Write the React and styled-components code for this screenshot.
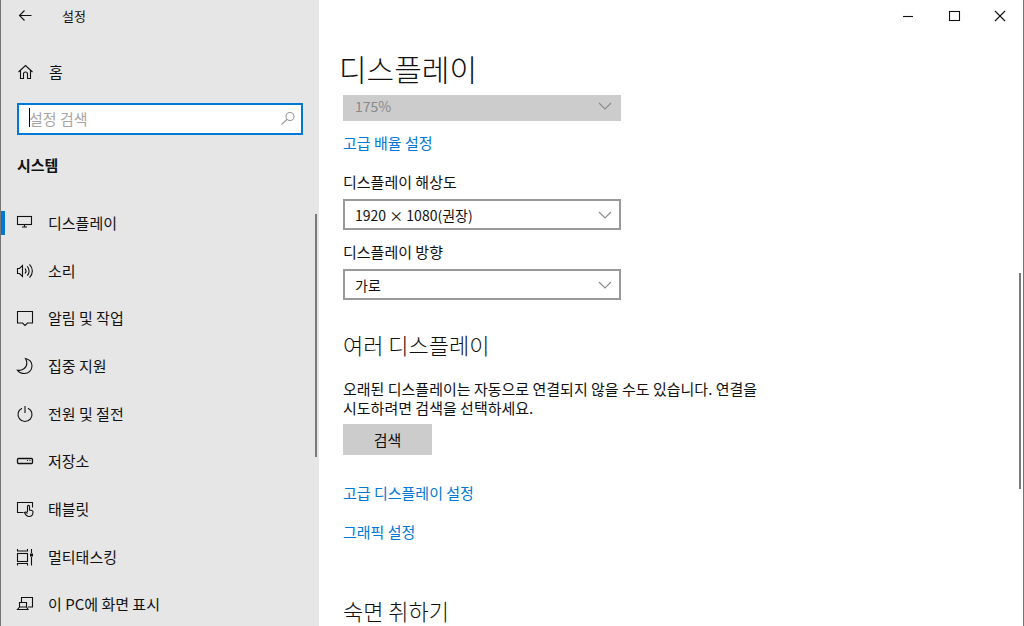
import React from "react";
import styled, { createGlobalStyle, css } from "styled-components";

const icons = {
  back: <path d="M15.5 8.5H3.5M8.5 3.5l-5 5 5 5" />,
  home: <path d="M1.5 9l7-6.5 7 6.5M3.5 7.5v8h3v-4.5a2 2 0 0 1 4 0v4.5h3v-8" />,
  display: (
    <>
      <rect x="1.5" y="2.5" width="14" height="8" />
      <path d="M8.5 10.5v2.5M6 13h5" />
    </>
  ),
  sound: (
    <>
      <path d="M1.5 6.5h2l3-3v11l-3-3h-2z" />
      <path d="M9 6.5c1.2 1.4 1.2 3.6 0 5M11.3 4.3c2.4 2.6 2.4 6.8 0 9.4M13.5 2.3c3.8 3.8 3.8 9.6 0 13.4" />
    </>
  ),
  notice: <path d="M1.5 2.5h15v11.5h-5l-2.5 2.5-2.5-2.5h-5z" />,
  moon: <path d="M9.5 1.5c4 1 6.5 4 6.5 7.5a7.5 7.5 0 0 1-7.5 7.5c-3 0-5.3-1-7-3.2 4.5.6 9.5-2.3 9.3-7.3 0-1.6-.5-3-1.3-4.5z" />,
  power: <path d="M9 1v7M6 3.2a7 7 0 1 0 6 0" />,
  storage: (
    <>
      <rect x="1.5" y="6.5" width="15" height="5" rx="1" strokeWidth="1.3" />
      <path d="M11 8.5h1M13.5 8.5h1" />
    </>
  ),
  tablet: (
    <>
      <path d="M7.5 12.5h-6v-10h15v5" />
      <path d="M11.5 12V6.5c0-1.5 2-1.5 2 0V10l2.5.5c.8.2 1 .7 1 1.5 0 2.5-1.5 4.5-4 4.5-2 0-3.3-1.3-4.5-4 1-.8 2-.5 3 1" />
    </>
  ),
  multitask: (
    <>
      <rect x="1.5" y="5.5" width="10" height="8" />
      <path d="M1.5 1v2h10V1M1.5 17.5v-2h10v2M15.5 1v4M15.5 9v8.5" />
      <path d="M14 7h3" strokeWidth="3" />
    </>
  ),
  project: (
    <>
      <path d="M5.5 7.5v-5h11v9.5h-4.5" />
      <path d="M3.5 7.5h7v4.5h-7zM3.5 12l-2 2.5h10.5l-1.5-2.5" />
    </>
  ),
  search: (
    <>
      <circle cx="11" cy="6.5" r="4" />
      <path d="M8 9.5l-5.5 5" />
    </>
  ),
  chevron: <path d="M3 6l6 6 6-6" />,
  minimize: <path d="M4 9.5h10" />,
  maximize: <rect x="4.5" y="4.5" width="10" height="9" />,
  close: <path d="M4 4l10 10M14 4L4 14" />,
};

const menu = [
  { icon: "display", label: "디스플레이", active: true },
  { icon: "sound", label: "소리" },
  { icon: "notice", label: "알림 및 작업" },
  { icon: "moon", label: "집중 지원" },
  { icon: "power", label: "전원 및 절전" },
  { icon: "storage", label: "저장소" },
  { icon: "tablet", label: "태블릿" },
  { icon: "multitask", label: "멀티태스킹" },
  { icon: "project", label: "이 PC에 화면 표시" },
];

const Icon = ({ name, className }) => (
  <StyledIcon className={className} viewBox="0 0 18 18" aria-hidden="true">
    {icons[name]}
  </StyledIcon>
);

const Dropdown = ({ id, value, disabled, label }) => (
  <StyledDropdown>
    <StyledSelect id={id} disabled={disabled} aria-label={label} defaultValue={value}>
      <option>{value}</option>
    </StyledSelect>
    <StyledChevron name="chevron" />
  </StyledDropdown>
);

const App = () => (
  <>
    <GlobalStyle />
    <StyledWindow>
      <StyledSidebar>
        <StyledTitleBar>
          <StyledBackButton aria-label="뒤로"><Icon name="back" /></StyledBackButton>
          <span>설정</span>
        </StyledTitleBar>
        <StyledHomeLink href="#home"><Icon name="home" />홈</StyledHomeLink>
        <StyledSearch>
          <StyledCaret />
          <StyledSearchInput type="text" placeholder="설정 검색" aria-label="설정 검색" />
          <StyledSearchIcon name="search" />
        </StyledSearch>
        <StyledGroupTitle>시스템</StyledGroupTitle>
        <StyledNav>
          <StyledMenu>
            {menu.map((item) => (
              <StyledMenuItem key={item.label}>
                <StyledMenuLink href={"#" + item.icon} $active={item.active}>
                  <Icon name={item.icon} />
                  {item.label}
                </StyledMenuLink>
              </StyledMenuItem>
            ))}
          </StyledMenu>
          <StyledThumb $top="15px" $height="243px" $right="2px" />
        </StyledNav>
      </StyledSidebar>
      <StyledMain>
        <StyledWindowControls>
          <StyledControl aria-label="최소화"><Icon name="minimize" /></StyledControl>
          <StyledControl aria-label="최대화"><Icon name="maximize" /></StyledControl>
          <StyledControl aria-label="닫기"><Icon name="close" /></StyledControl>
        </StyledWindowControls>
        <StyledPageTitle>디스플레이</StyledPageTitle>
        <StyledScrollArea>
          <StyledContent>
            <Dropdown value="175%" label="배율" disabled />
            <StyledLink href="#scale">고급 배율 설정</StyledLink>
            <StyledLabel htmlFor="resolution">디스플레이 해상도</StyledLabel>
            <Dropdown id="resolution" value="1920 × 1080(권장)" />
            <StyledLabel htmlFor="orientation">디스플레이 방향</StyledLabel>
            <Dropdown id="orientation" value="가로" />
            <StyledHeading>여러 디스플레이</StyledHeading>
            <StyledText>
              오래된 디스플레이는 자동으로 연결되지 않을 수도 있습니다. 연결을 시도하려면 검색을 선택하세요.
            </StyledText>
            <StyledButton>검색</StyledButton>
            <StyledLinkList>
              <StyledLink href="#advanced">고급 디스플레이 설정</StyledLink>
              <StyledLink href="#graphics">그래픽 설정</StyledLink>
            </StyledLinkList>
            <StyledHeading $last>숙면 취하기</StyledHeading>
          </StyledContent>
          <StyledThumb $top="178px" $height="216px" $right="2px" />
        </StyledScrollArea>
      </StyledMain>
    </StyledWindow>
  </>
);

export default App;

const GlobalStyle = createGlobalStyle`
  * {
    box-sizing: border-box;
  }

  body {
    margin: 0;
    font-family: "Noto Sans CJK KR", "Noto Sans", sans-serif;
    font-size: 15px;
    line-height: 20px;
    color: #111;
  }

  button, input, select {
    font: inherit;
    color: inherit;
  }
`;

const StyledWindow = styled.div`
  display: flex;
  height: 100vh;
  overflow: hidden;
  background: #fff;
  border: solid #767676;
  border-width: 0 1px;
`;

const StyledIcon = styled.svg`
  flex: none;
  width: 18px;
  height: 18px;
  fill: none;
  stroke: currentColor;
  stroke-width: 1.1;
`;

const StyledSidebar = styled.aside`
  display: flex;
  flex: none;
  flex-direction: column;
  width: 318px;
  background: #e6e6e6;
`;

const StyledTitleBar = styled.header`
  display: flex;
  flex: none;
  align-items: center;
  height: 32px;
  font-size: 13px;
`;

const plainButton = css`
  display: flex;
  align-items: center;
  justify-content: center;
  padding: 0;
  border: 0;
  background: transparent;
`;

const StyledBackButton = styled.button`
  ${plainButton}
  width: 48px;
  height: 32px;
  margin-right: 13px;
`;

const StyledHomeLink = styled.a`
  display: flex;
  flex: none;
  align-items: center;
  gap: 14px;
  height: 48px;
  margin-top: 16px;
  padding-left: 16px;
  color: inherit;
  text-decoration: none;
`;

const StyledSearch = styled.div`
  position: relative;
  flex: none;
  margin: 7px 16px 0;
`;

const StyledSearchInput = styled.input`
  display: block;
  width: 100%;
  height: 32px;
  padding: 0 36px 2px 10px;
  border: 2px solid #0078d7;
  border-radius: 0;
  outline: 0;
  background: #fff;

  &::placeholder {
    color: #a6a6a6;
    opacity: 1;
  }
`;

const StyledCaret = styled.span`
  position: absolute;
  top: 5px;
  left: 12px;
  width: 1px;
  height: 19px;
  background: #000;
`;

const StyledSearchIcon = styled(Icon)`
  position: absolute;
  top: 7px;
  right: 6px;
  color: #999;
`;

const StyledGroupTitle = styled.h2`
  flex: none;
  margin: 20px 16px 0;
  font-size: 15px;
  font-weight: 700;
  line-height: 20px;
`;

const StyledNav = styled.nav`
  position: relative;
  display: flex;
  flex: 1;
  min-height: 0;
  margin-top: 24px;
`;

const StyledMenu = styled.ul`
  display: flex;
  flex: 1;
  flex-direction: column;
  margin: 0 0 -2px;
  padding: 0;
  list-style: none;
`;

const StyledMenuItem = styled.li`
  display: flex;
  flex: 1;
  align-items: center;
  max-height: 48px;
`;

const StyledMenuLink = styled.a`
  display: flex;
  flex: 1;
  align-items: center;
  gap: 14px;
  height: 24px;
  padding-left: 11px;
  border-left: 4px solid ${(props) => (props.$active ? "#0078d7" : "transparent")};
  color: inherit;
  text-decoration: none;
`;

const StyledThumb = styled.div`
  position: absolute;
  top: ${(props) => props.$top};
  right: ${(props) => props.$right};
  width: 2px;
  height: ${(props) => props.$height};
  background: #7a7a7a;
`;

const StyledMain = styled.main`
  display: flex;
  flex: 1;
  flex-direction: column;
  min-width: 0;
`;

const StyledWindowControls = styled.div`
  display: flex;
  flex: none;
  justify-content: flex-end;
  height: 32px;
`;

const StyledControl = styled.button`
  ${plainButton}
  width: 46px;
`;

const StyledPageTitle = styled.h1`
  flex: none;
  margin: 16px 20px 7px;
  font-size: 30px;
  font-weight: 300;
  line-height: 40px;
`;

const StyledScrollArea = styled.div`
  position: relative;
  flex: 1;
  min-height: 0;
  overflow: hidden;
`;

/* scrolled down a little, so the first field is cut by the title */
const StyledContent = styled.div`
  display: flex;
  flex-direction: column;
  align-items: flex-start;
  max-width: 478px;
  margin-top: -5px;
  padding: 0 24px;
`;

const StyledDropdown = styled.div`
  position: relative;
  width: 278px;
`;

const StyledSelect = styled.select`
  display: block;
  width: 100%;
  height: 31px;
  padding: 0 36px 0 10px;
  border: 2px solid #999;
  border-radius: 0;
  appearance: none;
  background: #fff;
  font-size: 14px;

  &:disabled {
    border-color: #ccc;
    background: #ccc;
    color: #8a8a8a;
    opacity: 1;
  }
`;

const StyledChevron = styled(Icon)`
  position: absolute;
  top: 7px;
  right: 7px;
  color: #8a8a8a;
  pointer-events: none;
`;

const StyledLabel = styled.label`
  margin: 19px 0 7px;

  ${StyledDropdown} + & {
    margin-top: 12px;
  }
`;

const StyledLink = styled.a`
  color: #0078d7;
  text-decoration: none;

  ${StyledDropdown} + & {
    margin-top: 12px;
  }
`;

const StyledHeading = styled.h2`
  margin: ${(props) => (props.$last ? "53px 0 0" : "29px 0 20px")};
  font-size: 22px;
  font-weight: 300;
  line-height: 30px;
`;

const StyledText = styled.p`
  margin: 0 0 7px;
  line-height: 19px;
`;

const StyledButton = styled.button`
  ${plainButton}
  width: 89px;
  height: 31px;
  background: #ccc;
`;

const StyledLinkList = styled.div`
  display: flex;
  flex-direction: column;
  gap: 19px;
  margin-top: 28px;
`;
